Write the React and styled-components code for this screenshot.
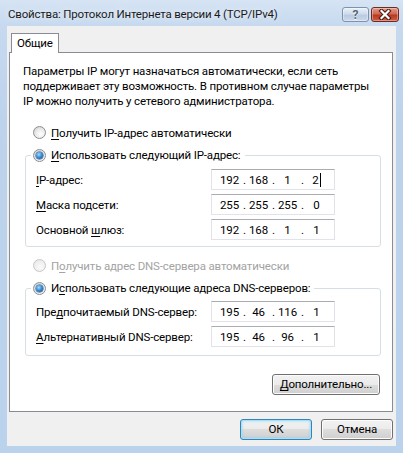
import React from 'react';
import styled, { createGlobalStyle } from 'styled-components';

const Global = createGlobalStyle`
  html, body { margin: 0; padding: 0; }
  body {
    width: 403px; height: 453px; overflow: hidden;
    background: #bcd3ed;
    font-family: Roboto, "Noto Sans", sans-serif;
    font-size: 11.5px; letter-spacing: -0.15px; color: #000;
  }
`;

const Window = styled.div`
  width: 403px; height: 453px; box-sizing: border-box;
  display: flex; flex-direction: column;
  padding: 0 7px 7px 7px;
  background: linear-gradient(to bottom, #d6e4f4 0px, #c6d9ef 26px, #bdd3ec 120px, #bbd2ec 100%);
`;

const TitleBar = styled.div`
  height: 26px; flex: none;
  margin: 0 -7px;
  padding: 0 4px 0 8px;
  display: flex; align-items: center; justify-content: space-between;
`;

const Title = styled.div`
  font-size: 11.5px; letter-spacing: -0.2px; color: #1b1b1b;
  text-shadow: 0 0 6px rgba(255,255,255,0.9);
  padding-top: 1px; white-space: nowrap;
`;

const Caption = styled.div`
  display: flex; gap: 2px; align-self: flex-start; margin-top: 7px;
`;

const CapButton = styled.div`
  box-sizing: border-box;
  width: ${p => (p.$close ? '28px' : '27px')}; height: 15px;
  border-radius: 3px;
  display: flex; align-items: center; justify-content: center;
  border: 1px solid ${p => (p.$close ? '#6e2a1e' : '#7d93ab')};
  background: ${p => p.$close
    ? 'linear-gradient(to bottom, #e59a88 0%, #d06a53 45%, #b93820 55%, #cf5e44 100%)'
    : 'linear-gradient(to bottom, #e9f0f8 0%, #d0dceb 45%, #b9cbe0 55%, #cbd9ea 100%)'};
  box-shadow: inset 0 0 0 1px rgba(255,255,255,0.35);
  color: #56687c; font-weight: bold; font-size: 12px; line-height: 1;
  text-shadow: 0 1px 0 #fff;
`;

const Client = styled.div`
  flex: 1; display: flex; flex-direction: column;
  background: #f0f0f0;
  padding: 7px 3px 6px 2px;
`;

const TabStrip = styled.div`
  display: flex; padding-left: 2px; position: relative; z-index: 1;
`;

const Tab = styled.div`
  box-sizing: border-box;
  width: 48px; height: 20px; margin-bottom: -1px;
  border: 1px solid #898c95; border-bottom: none;
  background: #fff;
  padding: 1px 0 0 5px;
  line-height: 17px;
`;

const Panel = styled.div`
  box-sizing: border-box; height: 360px; flex: none;
  border: 1px solid #898c95; background: #fff;
  padding: 11px 11px 0 13px;
  display: flex; flex-direction: column;
`;

const Para = styled.p`
  margin: 0; line-height: 15px; white-space: nowrap;
`;

const RadioRow = styled.label`
  display: flex; align-items: center; height: 15px;
  margin: ${p => p.$mt || '0'} 0 0 ${p => p.$ml || '0'};
  color: ${p => (p.$disabled ? '#a3a3a3' : '#000')};
  white-space: nowrap;
`;

const RadioDot = styled.span`
  box-sizing: border-box; flex: none;
  width: 13px; height: 13px; border-radius: 50%;
  margin-right: 5px;
  border: 1px solid ${p => (p.$disabled ? '#c8c8c8' : '#8b8f96')};
  background: ${p => p.$disabled
    ? 'radial-gradient(circle at 60% 65%, #fafafa 0, #eeeeee 60%, #e0e0e0 100%)'
    : 'radial-gradient(circle at 60% 65%, #ffffff 0, #eaeaea 50%, #c8c8c8 100%)'};
  display: flex; align-items: center; justify-content: center;
  &::after {
    content: '';
    display: ${p => (p.$checked ? 'block' : 'none')};
    width: 7px; height: 7px; border-radius: 50%;
    background: radial-gradient(circle at 40% 35%, #a5dcff 0, #3d8fd6 45%, #0f3e78 100%);
    box-shadow: 0 0 0 0.5px #1b4f86;
  }
`;

const Key = styled.span`
  text-decoration: underline;
  text-underline-offset: 2px;
`;

const Group = styled.fieldset`
  margin: ${p => p.$mt} 0 0 2px;
  border: 1px solid #d5dfe5; border-radius: 3px;
  padding: ${p => p.$pt} 10px ${p => p.$pb} 10px;
  min-width: 0;
`;

const Legend = styled.legend`
  padding: 0 4px 0 2px; margin-left: -5px;
  line-height: 15px;
`;

const Fields = styled.div`
  display: grid; grid-template-columns: 175px 124px; row-gap: 4px;
  align-items: center;
`;

const FieldLabel = styled.div`
  white-space: nowrap; padding-top: 1px;
`;

const IpBox = styled.div`
  box-sizing: border-box; height: 21px;
  display: flex; align-items: center;
  padding-left: 5px;
  border: 1px solid #e2e3ea; border-top-color: #abadb3;
  background: #fff;
`;

const Octet = styled.span`
  width: 25px; white-space: nowrap;
  display: inline-flex; justify-content: center; align-items: center;
`;

const Dot = styled.span`
  width: 4px; text-align: right;
`;

const Caret = styled.span`
  display: inline-block; width: 1px; height: 14px; background: #000;
  margin-left: 1px;
`;

const BtnRow = styled.div`
  display: flex; justify-content: flex-end;
  margin-top: ${p => p.$mt || '0'};
  margin-right: ${p => p.$mr || '0'};
  gap: 9px;
`;

const Button = styled.div`
  box-sizing: border-box;
  width: ${p => p.$w}; height: 21px;
  border: 1px solid ${p => (p.$default ? '#3c7fb1' : '#707070')};
  border-radius: 3px;
  background: linear-gradient(to bottom, #f2f2f2 0%, #ebebeb 50%, #dddddd 50%, #cfcfcf 100%);
  box-shadow: ${p => (p.$default
    ? 'inset 0 0 0 1px #9ee4fb, inset 0 0 2px 2px rgba(120,205,245,0.35)'
    : 'inset 0 0 0 1px #fcfcfc')};
  display: flex; align-items: center; justify-content: center;
  line-height: 1; white-space: nowrap;
`;

function Ip({ parts, caret }) {
  return (
    <IpBox>
      {parts.map((p, i) => (
        <React.Fragment key={i}>
          <Octet>
            {p}
            {caret && i === 3 ? <Caret /> : null}
          </Octet>
          {i < 3 ? <Dot>.</Dot> : null}
        </React.Fragment>
      ))}
    </IpBox>
  );
}

function CloseGlyph() {
  return (
    <svg width="14" height="11" viewBox="0 0 14 11">
      <path d="M3.5 2 L10.5 9 M10.5 2 L3.5 9" stroke="#4a1a12" strokeWidth="4.2" strokeLinecap="square" />
      <path d="M3.5 2 L10.5 9 M10.5 2 L3.5 9" stroke="#ffffff" strokeWidth="2.2" strokeLinecap="square" />
    </svg>
  );
}

export default function App() {
  return (
    <>
      <Global />
      <Window>
        <TitleBar>
          <Title>Свойства: Протокол Интернета версии 4 (TCP/IPv4)</Title>
          <Caption>
            <CapButton>?</CapButton>
            <CapButton $close><CloseGlyph /></CapButton>
          </Caption>
        </TitleBar>
        <Client>
          <TabStrip>
            <Tab>Общие</Tab>
          </TabStrip>
          <Panel>
            <Para>
              Параметры IP могут назначаться автоматически, если сеть<br />
              поддерживает эту возможность. В противном случае параметры<br />
              IP можно получить у сетевого администратора.
            </Para>
            <RadioRow $mt="16px" $ml="10px">
              <RadioDot />
              <span><Key>П</Key>олучить IP-адрес автоматически</span>
            </RadioRow>
            <Group $mt="8px" $pt="6px" $pb="6px">
              <Legend>
                <RadioRow>
                  <RadioDot $checked />
                  <span><Key>И</Key>спользовать следующий IP-адрес:</span>
                </RadioRow>
              </Legend>
              <Fields>
                <FieldLabel><Key>I</Key>P-адрес:</FieldLabel>
                <Ip parts={['192', '168', '1', '2']} caret />
                <FieldLabel><Key>М</Key>аска подсети:</FieldLabel>
                <Ip parts={['255', '255', '255', '0']} />
                <FieldLabel>Основной <Key>ш</Key>люз:</FieldLabel>
                <Ip parts={['192', '168', '1', '1']} />
              </Fields>
            </Group>
            <RadioRow $mt="11px" $ml="10px" $disabled>
              <RadioDot $disabled />
              <span>П<Key>о</Key>лучить адрес DNS-сервера автоматически</span>
            </RadioRow>
            <Group $mt="8px" $pt="5px" $pb="8px">
              <Legend>
                <RadioRow>
                  <RadioDot $checked />
                  <span>И<Key>с</Key>пользовать следующие адреса DNS-серверов:</span>
                </RadioRow>
              </Legend>
              <Fields>
                <FieldLabel>Пре<Key>д</Key>почитаемый DNS-сервер:</FieldLabel>
                <Ip parts={['195', '46', '116', '1']} />
                <FieldLabel><Key>А</Key>льтернативный DNS-сервер:</FieldLabel>
                <Ip parts={['195', '46', '96', '1']} />
              </Fields>
            </Group>
            <BtnRow $mt="18px" $mr="1px">
              <Button $w="108px"><Key>Д</Key>ополнительно...</Button>
            </BtnRow>
          </Panel>
          <BtnRow $mt="7px">
            <Button $w="72px" $default>ОК</Button>
            <Button $w="72px">Отмена</Button>
          </BtnRow>
        </Client>
      </Window>
    </>
  );
}
